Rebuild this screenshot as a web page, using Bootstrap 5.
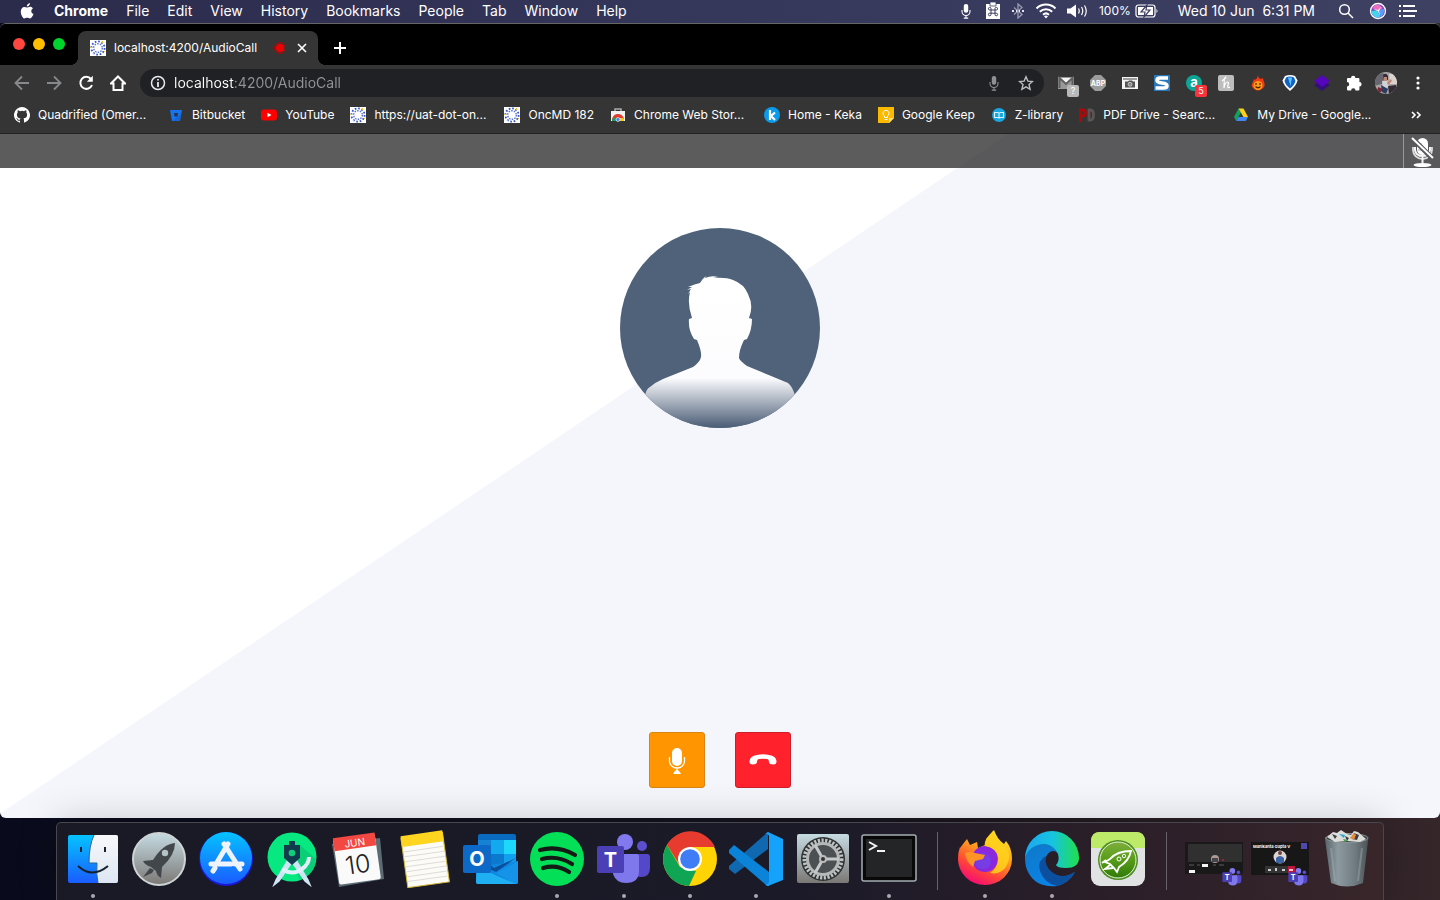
<!DOCTYPE html>
<html lang="en">
<head>
<meta charset="utf-8">
<meta name="viewport" content="width=device-width, initial-scale=1">
<title>localhost:4200/AudioCall</title>
<link href="https://cdn.jsdelivr.net/npm/bootstrap@5.3.0/dist/css/bootstrap.min.css" rel="stylesheet">
<style>
body{font-family:Inter,"Liberation Sans",sans-serif;color:#fff;font-size:12px;line-height:16px;background:linear-gradient(90deg,#090b1c,#17141d 60%,#35262a)}
svg{display:block;flex:none}
button,.plain-link{border:0;background:none;padding:0;color:inherit;text-decoration:none}
.menubar{height:23px;padding:0 22px 2px 18px;font-size:14px;line-height:20px;background:linear-gradient(90deg,#2b2b4b,#34365a 45%,#3f4163);white-space:nowrap}
.menubar-menus{gap:18px}
.menubar-status{gap:11px}
.status-icons{gap:9px}
.battery{font-size:12px}
.window{margin-bottom:4px;border-radius:6px;overflow:hidden;background:#353535;border-top:1px solid #666}
.tabstrip{height:41px;background:#000;padding-left:13px}
.lights{padding-bottom:2px}
.light{width:12px;height:12px;border-radius:50%}
.light-close{background:#ff4640}
.light-min{background:#ffbf00}
.light-max{background:#00d52e}
.page-tab{width:240px;height:34px;padding:0 8px 0 12px;background:#353535;border-radius:8px 8px 0 0;margin-left:13px;position:relative}
.page-tab::before,.page-tab::after{content:"";position:absolute;bottom:0;width:8px;height:8px}
.page-tab::before{left:-8px;background:radial-gradient(circle at 0 0,#000 8px,#353535 8px)}
.page-tab::after{right:-8px;background:radial-gradient(circle at 100% 0,#000 8px,#353535 8px)}
.toolbar{height:36px;padding:0 6px}
.tool{width:32px;height:32px;display:flex;align-items:center;justify-content:center;position:relative}
.tool-badge{position:absolute;right:3px;bottom:2px;width:12px;height:12px;border-radius:2px;font-size:9px;line-height:12px;text-align:center;background:#b9b9b9}
.tool-badge.alerting{background:#f8333c}
.omnibox{height:28px;border-radius:14px;background:#202124;margin:0 6px;padding:0 2px 0 10px}
.omnibox input{border:0;outline:0;min-width:0;padding:0;margin-left:8px;font-size:14px;line-height:20px;color:#9aa0a6;background:linear-gradient(90deg,#fff 61px,#929497 61px);-webkit-background-clip:text;background-clip:text;-webkit-text-fill-color:transparent}
.bookmarks{height:33px;padding:0 14px 4px;border-bottom:1px solid #222;white-space:nowrap}
.bookmark{display:flex;align-items:center;gap:8px;margin-right:16px}
.bookmark.clipped span{width:114px}
.call{background:linear-gradient(146deg,#fff 563px,#f5f6fc 564px)}
.call-bar{height:34px;background:rgba(0,0,0,.64)}
.mute-state{width:37px;border-left:1px solid #999}
.avatar{margin-top:60px}
.call-actions{gap:30px;padding-bottom:30px}
.call-btn{width:56px;height:56px;border-radius:3px;display:flex;align-items:center;justify-content:center}
.btn-mic{background:#ff9500;border:1px solid #d98515}
.btn-hang{background:#ff222d;border:1px solid #cb2029}
.dock{height:78px;margin:0 56px;padding:0 3px;border:1px solid #49474e;border-bottom:0;border-radius:5px 5px 0 0;background:linear-gradient(90deg,#191a26,#1b1a28 55%,#2e2029 85%,#38262a);box-shadow:0 0 40px rgba(0,0,0,.2);position:relative}
.dock-item{flex:1 1 0;height:77px;padding-top:7px;display:flex;flex-direction:column;align-items:center;position:relative}
.dock-item.running::after{content:"";position:absolute;bottom:2px;width:4px;height:4px;border-radius:50%;background:#aaa9b1}
.dock-rule{width:30px;display:flex;justify-content:center}
.dock-rule::before{content:"";width:1px;height:58px;margin-top:9px;background:#66616a}
</style>
</head>
<body class="min-vh-100 d-flex flex-column overflow-hidden">
<svg width="0" height="0" class="position-absolute" aria-hidden="true">
<defs>
<linearGradient id="blueSky" x2="0" y2="1"><stop stop-color="#05c3ff"/><stop offset="1" stop-color="#1a5cff"/></linearGradient>
<linearGradient id="silver" x2="0" y2="1"><stop stop-color="#c5dbe2"/><stop offset="1" stop-color="#7b7875"/></linearGradient>
<linearGradient id="paper" x2="0" y2="1"><stop stop-color="#f8f8fb"/><stop offset="1" stop-color="#dce6f2"/></linearGradient>
<linearGradient id="fox" x1=".8" y1="0" x2=".3" y2="1"><stop stop-color="#fff42e"/><stop offset=".4" stop-color="#ffa01c"/><stop offset=".72" stop-color="#ff4638"/><stop offset="1" stop-color="#f50778"/></linearGradient>
<linearGradient id="edgeTop"><stop stop-color="#1ba7ee"/><stop offset=".5" stop-color="#17c3e3"/><stop offset="1" stop-color="#1fe04a"/></linearGradient>
<linearGradient id="edgeLow" x2=".6" y2="1"><stop stop-color="#0f78c8"/><stop offset="1" stop-color="#0a84e8"/></linearGradient>
<linearGradient id="bin" x2="1" y2="0"><stop stop-color="#59656a"/><stop offset=".3" stop-color="#8d9a9f"/><stop offset=".7" stop-color="#6f7b80"/><stop offset="1" stop-color="#4b5357"/></linearGradient>
<linearGradient id="leaf" x2="0" y2="1"><stop stop-color="#7fae3c"/><stop offset=".5" stop-color="#579c18"/><stop offset="1" stop-color="#2f7a08"/></linearGradient>
<linearGradient id="bust" gradientUnits="userSpaceOnUse" x1="0" y1="0" x2="0" y2="200"><stop offset=".3" stop-color="#fff"/><stop offset=".75" stop-color="#fcfcfe"/><stop offset=".99" stop-color="#50627a"/></linearGradient>
<symbol id="onc" viewBox="0 0 16 16"><path fill="#fff" d="M0 0h16v16H0z"/><g fill="none" stroke-width="1.8"><circle cx="8" cy="8" r="6.6" stroke="#3454c5" stroke-dasharray="1.7 1.75"/><circle cx="8" cy="8" r="4.3" stroke="#5972d6" stroke-width="1.4" stroke-dasharray="1.5 1.2"/></g><path fill="#f0c33b" d="M0 7h2v1H0zM3 13h1v1H3zM12 1h1v2h-1zM14 11h1v1h-1z"/></symbol>
<symbol id="teams" viewBox="0 0 56 56"><circle cx="46" cy="15" r="5" fill="#5b4fd0"/><path fill="#5448c8" d="M38 23h13q3 0 3 3v11q0 9-9 9-5 0-8-3z"/><circle cx="29" cy="11" r="8" fill="#8279ee"/><path fill="#7f77ec" d="M18 23h23q2 0 2 3v14q0 12-13 12-10 0-13-9z"/><rect x="1" y="15" width="27" height="27" rx="2" fill="#4b3fb5"/><text x="14.500" y="36" fill="#fff" font-size="20" font-weight="700" text-anchor="middle">T</text></symbol>
<symbol id="mic" viewBox="0 0 12 18"><rect x="3.500" y="1" width="5" height="10" rx="2.500" fill="currentColor"/><path d="M1.500 8v1.500a4.500 4.500 0 0 0 9 0V8M6 14v3M3.500 17h5" fill="none" stroke="currentColor" stroke-width="1.200"/></symbol>
</defs></svg>

<header class="menubar d-flex justify-content-between">
<nav class="menubar-menus d-flex align-items-center" aria-label="Menu bar">
<button aria-label="Apple"><svg width="18" height="18" viewBox="0 0 18 18" fill="#fff"><path d="M12 1c0 2-1.500 3.600-3.200 3.500C8.700 2.700 10.200 1.200 12 1zM9 5.600c.8 0 1.600-.8 3.100-.8 1.200 0 2.200.6 2.900 1.500-2.500 1.500-2.100 4.800.5 5.800-.6 1.700-2 4.400-3.600 4.400-1 0-1.500-.7-2.800-.7s-1.800.7-2.800.7C4.300 16.500 1 9 4 6.200c1.900-2 3.800-.7 5-.6z"/></svg></button>
<button class="fw-bold">Chrome</button><button>File</button><button>Edit</button><button>View</button><button>History</button><button>Bookmarks</button><button>People</button><button>Tab</button><button>Window</button><button>Help</button>
</nav>
<div class="menubar-status d-flex align-items-center">
<div class="status-icons d-flex align-items-center">
<svg class="me-1" width="12" height="16"><use href="#mic"/></svg>
<svg width="16" height="18" viewBox="0 0 16 18"><path d="M1 2h14v15H1z" fill="#fff"/><path d="M5 0h6v4H5z" fill="#fff" stroke="#3b3d60" stroke-width=".8"/><path d="M6 8V6.500A1.300 1.300 0 1 0 4.700 8h6.600A1.300 1.300 0 1 0 10 6.500v6a1.300 1.300 0 1 0 1.300-1.300H4.700A1.300 1.300 0 1 0 6 12.500z" fill="none" stroke="#3b3d60" stroke-width="1"/></svg>
<svg width="16" height="16" viewBox="0 0 16 16" fill="none" stroke="#9a9bb4" stroke-width="1.300"><path d="M4 4.500l8 7L8 15V1l4 3.500-8 7"/><path d="M2 8h2m2 0h1m2 0h1m2 0h2" stroke="#e6e6ef" stroke-width="2"/></svg>
<svg width="22" height="16" viewBox="0 0 22 16" fill="none" stroke="#fff" stroke-width="2"><path d="M1.500 5.500a13.500 13.500 0 0 1 19 0M4.800 8.700a8.800 8.800 0 0 1 12.400 0M8 11.700a4.500 4.500 0 0 1 6 0"/><path d="M9 13.300L11 15.500l2-2.200a3 3 0 0 0-4 0z" fill="#fff" stroke="none"/></svg>
<svg width="22" height="16" viewBox="0 0 22 16"><path fill="#fff" d="M1 5.500h3.500L10 1.500v13L4.500 10.500H1z"/><path d="M12.500 5.500q1.500 2.500 0 5M15.500 4q2.500 4 0 8M18.500 2.500q3.500 5.500 0 11" fill="none" stroke="#fff" stroke-width="1.200"/></svg>
</div>
<div class="battery d-flex align-items-center gap-1 me-2"><span>100%</span>
<svg width="24" height="14" viewBox="0 0 24 14"><rect x="1" y="1" width="19" height="12" rx="2.500" fill="none" stroke="#fff" stroke-width="1.200"/><path d="M3 3h15v8H3z" fill="#fff"/><path d="M12 1L6 8h4l-1 5 6-7h-4z" fill="#fff" stroke="#3d3f62" stroke-width="1.200"/><path d="M21.500 5q2 2 0 4z" fill="#fff"/></svg></div>
<time class="me-2">Wed 10 Jun&nbsp; 6:31 PM</time>
<button class="mx-1" aria-label="Search"><svg width="16" height="16" viewBox="0 0 16 16" fill="none" stroke="#fff" stroke-width="1.500"><circle cx="6.500" cy="6.500" r="4.800"/><path d="M10 10l5 5"/></svg></button>
<svg width="18" height="18" viewBox="0 0 18 18"><circle cx="9" cy="9" r="7.500" fill="#6548bd" stroke="#fff" stroke-width="1.300"/><path d="M3 6q5-7 11 0L9 9z" fill="#ef6cbf"/><path d="M2 9l7-1 2 7q-7 2-9-6z" fill="#48d2ed"/><path d="M8 8l7-1q1 5-4 8z" fill="#5d9dfa"/><path d="M4 7l5 1 3-3-2 4 1 5-2-5z" fill="#fff"/></svg>
<svg width="20" height="14" viewBox="0 0 20 14" stroke="#fff" stroke-width="1.800"><path d="M1 2h2m2 0h12M1 7h2m2 0h14M1 12h2m2 0h12"/></svg>
</div>
</header>

<div class="window flex-grow-1 d-flex flex-column">
<div class="tabstrip d-flex align-items-end">
<div class="lights d-flex gap-2 align-self-center"><span class="light light-close"></span><span class="light light-min"></span><span class="light light-max"></span></div>
<div class="page-tab d-flex align-items-center"><svg width="16" height="16"><use href="#onc"/></svg><span class="ms-2 flex-grow-1 text-nowrap">localhost:4200/AudioCall</span>
<svg width="12" height="12" viewBox="0 0 12 12" class="me-2"><circle cx="6" cy="6" r="5.400" fill="none" stroke="#c00000"/><circle cx="6" cy="6" r="4" fill="#ef0000"/></svg>
<button aria-label="Close tab"><svg width="16" height="16" viewBox="0 0 16 16" stroke="#fff" stroke-width="1.600"><path d="M4 4l8 8m0-8l-8 8"/></svg></button></div>
<button class="ms-3 mb-2" aria-label="New tab"><svg width="12" height="20" viewBox="0 0 12 20" stroke="#fff" stroke-width="2"><path d="M6 5v12M0 11h12"/></svg></button>
</div>

<div class="toolbar d-flex align-items-center">
<button class="tool" aria-label="Back"><svg width="16" height="16" viewBox="0 0 16 16" fill="none" stroke="#87888a" stroke-width="1.800"><path d="M15 8H2m6-6.500L1.500 8 8 14.500"/></svg></button>
<button class="tool" aria-label="Forward"><svg width="16" height="16" viewBox="0 0 16 16" fill="none" stroke="#87888a" stroke-width="1.800"><path d="M1 8h13M8 1.500L14.500 8 8 14.500"/></svg></button>
<button class="tool" aria-label="Reload"><svg width="16" height="16" viewBox="0 0 16 16" fill="none" stroke="#fff" stroke-width="2"><path d="M13 4a6 6 0 1 0 1 6"/><path d="M14.800.8v6h-6z" fill="#fff" stroke="none"/></svg></button>
<button class="tool" aria-label="Home"><svg width="16" height="16" viewBox="0 0 16 16" fill="none" stroke="#fff" stroke-width="2"><path d="M1 8.500h2.500V15h9V8.500H15L8 1.500z"/></svg></button>
<div class="omnibox d-flex align-items-center flex-grow-1">
<svg width="16" height="16" viewBox="0 0 16 16" fill="none" stroke="#e8eaed" stroke-width="1.500"><circle cx="8" cy="8" r="6.500"/><path d="M8 7v5M8 4v1.600" stroke-width="1.800"/></svg>
<input class="flex-grow-1" type="text" value="localhost:4200/AudioCall" aria-label="Address" spellcheck="false">
<button class="tool text-white-50" aria-label="Microphone access"><svg width="12" height="16"><use href="#mic"/></svg></button>
<button class="tool" aria-label="Bookmark this tab"><svg width="16" height="16" viewBox="0 0 16 16" fill="none" stroke="#bcbdbf" stroke-width="1.400"><path d="M8 1.800l1.900 4.300 4.600.4L11 9.600l1.100 4.700L8 11.800l-4.100 2.500L5 9.600 1.500 6.500l4.600-.4z"/></svg></button>
</div>
<button class="tool" aria-label="Mail checker"><svg width="16" height="16" viewBox="0 0 16 16"><path fill="#999" d="M0 2h16v12H0z"/><path fill="#f4f4f4" d="M2.500 3h11L8 8z"/><path d="M1.500 13V3L8 9l6.500-6v10" fill="none" stroke="#606060" stroke-width="2"/></svg><span class="tool-badge">?</span></button>
<button class="tool" aria-label="Ad blocker"><svg width="16" height="16" viewBox="0 0 16 16"><path fill="#9c9c9c" d="M5 0h6l5 5v6l-5 5H5l-5-5V5z"/><text x="8" y="11" text-anchor="middle" font-size="7" font-weight="700" fill="#fff">ABP</text></svg></button>
<button class="tool" aria-label="Screenshot"><svg width="16" height="16" viewBox="0 0 16 16"><path d="M0 2h16v12H0z" fill="#f5f5f5"/><path d="M1 4h14" stroke="#444"/><path d="M3 6.500h3l1-1h3l1 1h2v6H3z" fill="#555"/><circle cx="8" cy="9.300" r="2" fill="#888" stroke="#ddd" stroke-width=".7"/></svg></button>
<button class="tool" aria-label="S extension"><svg width="16" height="16" viewBox="0 0 16 16"><path fill="#2879bc" d="M0 0h16v16H0z"/><path d="M14 3H6Q3 3 3 5.200t5 2.800 5 2.800-3 2.200H1.500" fill="none" stroke="#fff" stroke-width="3.500"/></svg></button>
<button class="tool" aria-label="Amazon assistant"><svg width="16" height="16" viewBox="0 0 16 16"><circle cx="8" cy="8" r="8" fill="#0da595"/><text x="8" y="12" text-anchor="middle" font-size="13" font-weight="700" fill="#fff">a</text></svg><span class="tool-badge alerting">5</span></button>
<button class="tool" aria-label="Honey"><svg width="16" height="16" viewBox="0 0 16 16"><rect width="16" height="16" rx="2" fill="#bdbdbd"/><path d="M4 6q5-4 3.500-4Q6 2 6 13q1-6 3.500-6Q11 7 10 10q-1 4 2 2" fill="none" stroke="#fff" stroke-width="1.200"/></svg></button>
<button class="tool" aria-label="Hola"><svg width="14" height="16" viewBox="0 0 14 16"><path fill="#f23a15" d="M7 0q0 3 3 4l2-1q0 2 1 4 2 5-2 7-4 3-8 0-4-3-1-7l1-3 1 1q3-2 3-5z"/><circle cx="7" cy="10.500" r="4.500" fill="#ff9b18"/><path d="M5 8v2m4-2v2M4.500 11.500q2.500 2.500 5 0" fill="none" stroke="#552208" stroke-width="1.200"/></svg></button>
<button class="tool" aria-label="Diamond extension"><svg width="16" height="16" viewBox="0 0 16 16"><path d="M3 1q5-2 10 0l2.500 4.500q-1 5-7.500 10.500Q1.500 10.500.5 5.500z" fill="#fff"/><path d="M4 2.500q4-2 8 0l1.500 3.500q-1 4-5.500 7.500Q3.500 10 2.500 6z" fill="#1263c1"/><path d="M6 2.500h4L8.500 11z" fill="#5cc4ff"/></svg></button>
<button class="tool" aria-label="Layers extension"><svg width="16" height="16" viewBox="0 0 16 16"><path d="M0 10l8-5 8 5-8 6z" fill="#321078"/><path d="M0 6l8-6 8 6-8 6z" fill="#5505bb"/></svg></button>
<button class="tool" aria-label="Extensions"><svg width="16" height="16" viewBox="0 0 16 16" fill="#fff"><path d="M1 4q0-1 1-1h3a2.200 2.200 0 1 1 4.400 0h3q1 0 1 1v3a2.200 2.200 0 1 1 0 4.400v3q0 1-1 1H9.500a2.200 2.200 0 1 0-4.400 0H2q-1 0-1-1v-3a2.200 2.200 0 1 0 0-4.400z"/></svg></button>
<button class="tool" aria-label="Profile"><svg width="22" height="22" viewBox="0 0 22 22"><clipPath id="pc"><circle cx="11" cy="11" r="11"/></clipPath><g clip-path="url(#pc)"><path fill="#aaa6a5" d="M0 0h22v22H0z"/><path fill="#d9d2ce" d="M14 2h8v10h-7z"/><path fill="#69666f" d="M0 3l8-2 4 5-5 6-8 2z"/><path fill="#cfd2d8" d="M7 9l5-1 2 7-6 2z"/><path fill="#352b35" d="M8 3q3-3 5 1v4l-4-1zM13 14l8-1v5l-7 4z"/><path fill="#c28773" d="M9 5h3v4H9zM12 11l4-4 1 2-4 4z"/><path fill="#8a2132" d="M3 15l5 2-2 3H2z"/><path fill="#293e61" d="M6 13l7 4-2 5-4-2z"/></g></svg></button>
<button class="tool" aria-label="More"><svg width="4" height="16" viewBox="0 0 4 16" fill="#fff"><circle cx="2" cy="3" r="1.600"/><circle cx="2" cy="8" r="1.600"/><circle cx="2" cy="13" r="1.600"/></svg></button>
</div>

<nav class="bookmarks d-flex align-items-center" aria-label="Bookmarks">
<a href="#" class="plain-link bookmark clipped"><svg width="16" height="16" viewBox="0 0 16 16" fill="#fff"><path d="M8 0a8 8 0 0 0-2.530 15.590c.4.070.55-.170.550-.380v-1.490c-2.230.480-2.700-.950-2.700-.950-.360-.920-.890-1.170-.890-1.170-.730-.500.050-.490.050-.490.800.060 1.230.830 1.230.830.720 1.220 1.870.870 2.330.660.070-.520.280-.870.510-1.070-1.780-.200-3.640-.890-3.640-3.950 0-.870.310-1.590.820-2.150-.080-.200-.360-1.020.080-2.120 0 0 .670-.210 2.200.820a7.600 7.600 0 0 1 4 0c1.530-1.040 2.200-.820 2.200-.820.440 1.100.160 1.920.080 2.120.510.560.820 1.270.820 2.150 0 3.070-1.870 3.750-3.650 3.950.290.250.540.730.540 1.480v2.200c0 .210.150.460.550.380A8 8 0 0 0 8 0z"/></svg><span>Quadrified (Omer...</span></a>
<a href="#" class="plain-link bookmark"><svg width="16" height="16" viewBox="0 0 16 16"><path d="M2 3h12l-2 11H4z" fill="#1873ee"/><path d="M6 6h4l-.6 3.500h-2.800z" fill="#263449"/><path d="M10 9l3-2-1 7H5z" fill="#135cc8" opacity=".6"/></svg><span>Bitbucket</span></a>
<a href="#" class="plain-link bookmark"><svg width="16" height="16" viewBox="0 0 16 16"><rect y="2.500" width="16" height="11" rx="3" fill="#f00"/><path fill="#fff" d="M6.500 5.700v4.600L10.500 8z"/></svg><span>YouTube</span></a>
<a href="#" class="plain-link bookmark clipped"><svg width="16" height="16"><use href="#onc"/></svg><span>https://uat-dot-on...</span></a>
<a href="#" class="plain-link bookmark"><svg width="16" height="16"><use href="#onc"/></svg><span>OncMD 182</span></a>
<a href="#" class="plain-link bookmark clipped"><svg width="16" height="16" viewBox="0 0 16 16"><path d="M5 4V2h6v2" fill="none" stroke="#aaa" stroke-width="1.500"/><path d="M1 4h14v10H1z" fill="#f1f1f1"/><path d="M2 14a6 6 0 0 1 12-2H8z" fill="#e33b2e"/><path d="M2 14q0-3 2-4l3 4z" fill="#16a05d"/><path d="M14 14q0-2-1-3H8l2 3z" fill="#fdc81b"/><circle cx="8" cy="12.500" r="2" fill="#4086f4" stroke="#fff" stroke-width=".6"/></svg><span>Chrome Web Stor...</span></a>
<a href="#" class="plain-link bookmark"><svg width="16" height="16" viewBox="0 0 16 16"><circle cx="8" cy="8" r="8" fill="#0b9bea"/><path d="M6 3v10M11 5.500L7 9l4 4" fill="none" stroke="#fff" stroke-width="2.200"/></svg><span>Home - Keka</span></a>
<a href="#" class="plain-link bookmark"><svg width="16" height="16" viewBox="0 0 16 16"><path d="M0 0h16v11l-5 5H0z" fill="#fbb900"/><path d="M11 16l5-5h-5z" fill="#ffe173"/><path d="M6.500 10.500V9a3 3 0 1 1 3 0v1.500zM6.500 12.500h3" fill="none" stroke="#fff" stroke-width="1"/></svg><span>Google Keep</span></a>
<a href="#" class="plain-link bookmark"><svg width="16" height="16" viewBox="0 0 16 16"><circle cx="8" cy="8" r="7" fill="#15a7e2"/><path d="M3.500 5.500h3q1.500 0 1.500 1 0-1 1.500-1h3v5h-3q-1.500 0-1.500 1 0-1-1.500-1h-3zM8 6v5" fill="none" stroke="#d8f4ff" stroke-width="1.100"/></svg><span>Z-library</span></a>
<a href="#" class="plain-link bookmark clipped"><svg width="16" height="16" viewBox="0 0 16 16" fill="none" stroke-width="2.800"><path d="M1.500 15V3H4q2.500 0 2.500 3T4 9H1.500" stroke="#ae0909"/><path d="M10 3v10h1.500q3 0 3-5t-3-5z" stroke="#5c5555"/></svg><span>PDF Drive - Searc...</span></a>
<a href="#" class="plain-link bookmark clipped"><svg width="16" height="16" viewBox="0 0 16 16"><path d="M5.500 1.500L1 10l2.200 4L8 5.500z" fill="#13a25b"/><path d="M5.500 1.500h5L15 10h-4.500z" fill="#ffcf19"/><path d="M5.500 10H15l-2.200 4H3.200z" fill="#4385f4"/></svg><span>My Drive - Google...</span></a>
<button class="ms-auto" aria-label="More bookmarks"><svg width="18" height="16" viewBox="0 0 18 16" fill="none" stroke="#fff" stroke-width="1.600"><path d="M4 5l3 3-3 3m5-6l3 3-3 3"/></svg></button>
</nav>

<main class="call flex-grow-1 d-flex flex-column align-items-center">
<div class="call-bar w-100 d-flex justify-content-end"><div class="mute-state d-flex align-items-center justify-content-center"><svg width="26" height="32" viewBox="0 0 26 32"><rect x="8" y="3" width="11" height="17" rx="5.500" fill="#fff"/><path d="M4 12v3a9.500 9 0 0 0 19 0v-3" fill="none" stroke="#ddd" stroke-width="1.800"/><path d="M6 12v3q1 6 7.500 6t7.500-6v-3M13.500 22v6" fill="none" stroke="#f4f4f4" stroke-width="2"/><ellipse cx="13.500" cy="30" rx="9" ry="2" fill="#fff"/><path d="M9 9h4m-4 3h5m-5 3h8" stroke="#aaa"/><path d="M3 3l20 20" stroke="#58585a" stroke-width="5"/><path d="M3 3l21 20" stroke="#fff" stroke-width="2"/></svg></div></div>
<svg class="avatar" width="200" height="200" viewBox="0 0 200 200" role="img" aria-label="Caller"><clipPath id="disc"><circle cx="100" cy="100" r="100"/></clipPath><circle cx="100" cy="100" r="100" fill="#50627a"/><path clip-path="url(#disc)" fill="url(#bust)" d="M72 90Q67 76 70 64L68 66 71 61 67 62 72 59 68 59Q75 56 80 55Q82 51 86 48L85 50Q92 47 98 49L93 50Q106 49 113 52Q124 56 128 66Q134 78 129 90L132 91Q132 102 127 111L124 112Q119 122 119 130Q120 133 127 138L168 155Q173 159 175 168V200H25V168Q26 161 30 159Q36 154 43 151L73 139Q80 134 81 129Q82 124 77 112L74 111Q68 102 69 91Z"/></svg>
<div class="call-actions d-flex mt-auto">
<button class="call-btn btn-mic" aria-label="Mute"><svg width="18" height="28" viewBox="0 0 18 28"><rect x="4" y="2" width="10" height="18" rx="5" fill="#fff"/><path d="M1.500 11v4a7.500 7 0 0 0 15 0v-4M9 22v3" fill="none" stroke="#fff" stroke-width="1.300"/><path d="M5 28q2-4 4-4t4 4z" fill="#fff"/></svg></button>
<button class="call-btn btn-hang" aria-label="Hang up"><svg width="28" height="14" viewBox="0 0 28 14"><path d="M.5 8Q1 3 8 2q6-1.500 12 0 7 1 7.500 6 .2 3.500-3 3.500-4.500 0-4.500-2.500-.2-3-2-3-4-.6-8 0-1.800 0-2 3-.2 2.500-4.500 2.500Q.3 11.500.5 8z" fill="#fff"/></svg></button>
</div>
</main>
</div>

<nav class="dock d-flex" aria-label="Dock">
<button class="dock-item running" aria-label="Finder"><svg width="56" height="58" viewBox="0 0 56 58"><rect x="3" y="5" width="50" height="48" rx="2" fill="url(#blueSky)"/><path d="M29 5h22q2 0 2 2v44q0 2-2 2H33q-2-9-1-20h-8Q24 15 29 5z" fill="url(#paper)"/><path d="M29 5q-5 11-5 28h8q-1 11 1 20" fill="none" stroke="#276796"/><path d="M16 17v5m24-5v5" stroke="#15212b" stroke-width="2"/><path d="M13 36q14 13 30 0" fill="none" stroke="#15212b" stroke-width="2"/></svg></button>
<button class="dock-item" aria-label="Launchpad"><svg width="56" height="58" viewBox="0 0 56 58"><circle cx="28" cy="29" r="26" fill="url(#silver)" stroke="#ced4d6" stroke-width="2"/><path d="M44 13q0 12-13 24l-1 11q-4-2-5-7l-5-4q-6-2-8-6l10-1Q32 14 44 13zM19 38l-7 9 9-4 2-3z" fill="#42474b"/><circle cx="34" cy="23" r="3.200" fill="#b3c3c9"/></svg></button>
<button class="dock-item" aria-label="App Store"><svg width="56" height="58" viewBox="0 0 56 58"><circle cx="28" cy="29" r="27" fill="#1b16d4"/><circle cx="28" cy="28" r="26" fill="url(#blueSky)"/><path d="M30 14L18 34M26 14l16 25M13 34h20m4 0h7M17 38l-2 3" stroke="#eef2fb" stroke-width="5" stroke-linecap="round"/></svg></button>
<button class="dock-item" aria-label="Android Studio"><svg width="56" height="58" viewBox="0 0 56 58"><circle cx="28" cy="27" r="24.500" fill="#08e880"/><path d="M36 15l16 14q-2 16-16 21l-8-18z" fill="#0bc474" opacity=".7"/><path d="M24 30L12 50l-2 5 5-4 13-19zM32 30l12 20 2 5-5-4-13-19z" fill="#cfe4f5" stroke="#cfe4f5" stroke-width="1.500"/><path d="M18 39q11 7 20 0 7-5 7-12" fill="none" stroke="#e1effa" stroke-width="4"/><path d="M20 15h5v-4h6v4h5v13l-8 7-8-7z" fill="#123b4d"/><circle cx="28" cy="23" r="3.300" fill="#10ce7c"/></svg></button>
<button class="dock-item" aria-label="Calendar"><svg width="56" height="58" viewBox="0 0 56 58"><path d="M2 14l48-6 4 41-45 8z" fill="#5b6a73"/><g transform="rotate(-8 28 29)"><rect x="6" y="6" width="42" height="46" rx="2" fill="#fafafa"/><path d="M6 5h42v13H6z" fill="#f34741"/><text x="27" y="16" text-anchor="middle" font-size="10" fill="#fff">JUN</text><text x="27" y="43" text-anchor="middle" font-size="25" font-weight="300" fill="#222">10</text></g></svg></button>
<button class="dock-item" aria-label="Notes"><svg width="56" height="58" viewBox="0 0 56 58"><g transform="rotate(-8 28 29)"><path d="M7 5h42v50H7z" fill="#fcfbf5" stroke="#d0b63b"/><path d="M7 3h42v11H7z" fill="#ffd51f"/><path d="M8 19h40M8 24h40M8 29h40M8 34h40M8 39h40M8 44h40M8 49h40" stroke="#dcdcdc"/></g></svg></button>
<button class="dock-item" aria-label="Outlook"><svg width="56" height="58" viewBox="0 0 56 58"><path d="M15 6q0-2 2-2h34q2 0 2 2v31H15z" fill="#086bc0"/><path d="M15 10h13v14H15z" fill="#1682d4"/><path d="M28 10h13v14H28z" fill="#12a9ee"/><path d="M41 10h12v14H41z" fill="#1ed8fc"/><path d="M28 24h13v14H28z" fill="#0b79ce"/><path d="M41 24h12v8l-12 7z" fill="#129ff0"/><path d="M13 37l42-6v21q0 2-2 2H15q-2 0-2-2z" fill="#1087e0"/><path d="M53 28L33 42l-18-8V24l16 14z" fill="#0a4f9b"/><path d="M55 31L33 43l18 11h2q2 0 2-2z" fill="#1493e8"/><path d="M14 37l39 17H15q-2 0-2-2z" fill="#1fb0f4"/><rect x="0" y="15" width="28" height="28" rx="2" fill="#0d69c8"/><text x="14" y="36" text-anchor="middle" font-size="20" font-weight="700" fill="#fff">O</text></svg></button>
<button class="dock-item running" aria-label="Spotify"><svg width="56" height="58" viewBox="0 0 56 58"><circle cx="28" cy="29" r="27" fill="#04df58"/><path d="M11 20q18-5 35 5M13 29q16-4 30 5M14 38q14-4 26 4" fill="none" stroke="#141a16" stroke-linecap="round" stroke-width="4.200"/></svg></button>
<button class="dock-item running" aria-label="Microsoft Teams"><svg width="56" height="58"><use href="#teams"/></svg></button>
<button class="dock-item running" aria-label="Chrome"><svg width="56" height="58" viewBox="0 0 56 58"><circle cx="28" cy="29" r="27" fill="#ffd304"/><path d="M5 15a27 27 0 0 1 48 2H28L17 34z" fill="#e63b2e"/><path d="M5 15l13 22 16 4-7 15A27 27 0 0 1 5 15z" fill="#10a455"/><circle cx="28" cy="29" r="12" fill="#fff"/><circle cx="28" cy="29" r="9.800" fill="#3f7df6"/></svg></button>
<button class="dock-item running" aria-label="Visual Studio Code"><svg width="56" height="58" viewBox="0 0 56 58"><path d="M40 2v17L7 44l-6-5v-3z" fill="#0f68b0"/><path d="M1 20l5-5 35 27v14q-2 0-4-2L1 23z" fill="#0a83d8"/><path d="M40 2l15 7v41l-15 6q-2 0-3-2 3 1 4-2V6q-1-3-4-2z" fill="#14a2fa"/></svg></button>
<button class="dock-item" aria-label="System Preferences"><svg width="56" height="58" viewBox="0 0 56 58"><rect x="2" y="4" width="52" height="49" rx="2" fill="url(#silver)"/><circle cx="28" cy="29" r="22" fill="#303234"/><circle cx="28" cy="29" r="18.500" fill="none" stroke="#bfc2c3" stroke-width="4" stroke-dasharray="2.200 1.500"/><circle cx="28" cy="29" r="15.500" fill="#4c5053" stroke="#b5b8b8" stroke-width="3"/><path d="M28 29h16M28 29l-8-14m8 14l-8 14" stroke="#c5c8c8" stroke-width="3"/><circle cx="28" cy="29" r="4" fill="#bbb"/><circle cx="28" cy="29" r="2" fill="#333"/></svg></button>
<button class="dock-item running" aria-label="Terminal"><svg width="56" height="58" viewBox="0 0 56 58"><rect x="1" y="5" width="54" height="46" rx="2" fill="#080808" stroke="#a4adb2" stroke-width="1.500"/><path d="M5 9h46v38H5z" fill="#242526"/><path d="M8 12l7 4-7 4M16 21h8" fill="none" stroke="#f4f4f4" stroke-width="2"/></svg></button>
<span class="dock-rule"></span>
<button class="dock-item running" aria-label="Firefox"><svg width="56" height="58" viewBox="0 0 56 58"><path d="M3 18l3-4 4-5 3 6 7-3 1 6 7-3 1-6 8-9q3 9 10 14l2-3q6 7 6 18a27 26 0 0 1-54 0q0-7 2-12z" fill="url(#fox)"/><circle cx="28" cy="29" r="13" fill="#8a28e0"/><circle cx="26" cy="31" r="8" fill="#6a4be8" opacity=".6"/><path d="M8 23q4-2 10 0l10 2-2 4-8 2-2 6q-7-5-8-14z" fill="#ff9426"/><path d="M36 1q-10 10-8 15 12 2 13 12 0 10-8 15 10 2 16-6 8-14-4-23-6-4-9-13z" fill="#ffd21c" opacity=".85"/></svg></button>
<button class="dock-item running" aria-label="Microsoft Edge"><svg width="56" height="58" viewBox="0 0 56 58"><path d="M1 28Q3 14 20 14Q30 15 34 23Q28 18 23 25Q17 36 27 44Q38 50 51 42Q45 53 33 56Q12 58 4 42Q1 36 1 28z" fill="url(#edgeLow)"/><path d="M22 26Q13 30 16 41Q20 53 33 56Q45 53 51 42Q38 50 28 42Q20 36 22 26z" fill="#0d4f9f"/><path d="M1 28A27 27 0 0 1 55 28Q55 38 42 38Q33 38 32 35Q36 31 34 24Q30 15 20 14Q5 15 1 28z" fill="url(#edgeTop)"/></svg></button>
<button class="dock-item" aria-label="Rocket app"><svg width="56" height="58" viewBox="0 0 56 58"><rect x="1" y="2" width="54" height="54" rx="9" fill="#e0e2e3"/><path d="M1 18v-7q0-9 9-9h36q9 0 9 9v7z" fill="#bdea68"/><circle cx="28" cy="30" r="20" fill="#4a8d20"/><circle cx="28" cy="30" r="18" fill="url(#leaf)" stroke="#e7f2d8"/><path d="M41 21q-2 10-12 16l-2 5-3-4-4-4-5-2 5-3q7-8 21-8zM20 35l-5 4 8-1M16 30l-4 3" fill="none" stroke="#fff" stroke-width="1.800"/><circle cx="29" cy="29" r="2" fill="none" stroke="#fff"/><circle cx="34" cy="26" r="1.700" fill="none" stroke="#fff"/></svg></button>
<span class="dock-rule"></span>
<button class="dock-item" aria-label="Teams meeting"><svg width="60" height="58" viewBox="0 0 60 58"><path d="M1 12h58v32H1z" fill="#191919"/><path d="M4 14h54v18H4z" fill="#303030"/><circle cx="31" cy="29" r="4" fill="#ae9a93"/><path d="M28 28h6v4h-6z" fill="#46474e"/><path d="M5 35h5m3 0h3m13 0h3m3 0h5" stroke="#3a3a3a" stroke-width="2"/><path d="M18 34h6v3h-6zM5 40h6v3H5z" fill="#f4f4f4"/><circle cx="39" cy="30" r="1" fill="#b22440"/><use href="#teams" x="38" y="37" width="20" height="20"/></svg></button>
<button class="dock-item" aria-label="Teams call"><svg width="60" height="58" viewBox="0 0 60 58"><path d="M1 12h58v33H1z" fill="#171717"/><text x="3" y="18" font-size="4" font-weight="700" fill="#fff">Manikanta Gupta V</text><path d="M51 13h6v6h-6z" fill="#5148ad"/><circle cx="30" cy="27" r="6.500" fill="#ddd6d3"/><circle cx="30" cy="23" r="2" fill="#70443a"/><path d="M26 33v-5q4-4 8 0v5z" fill="#3d63a7"/><path d="M15 36h23v7H15z" fill="#343434"/><path d="M38 36h7v7h-7z" fill="#bd173e"/><path d="M18 40h3m5-2v3m6-1h3m4 0h4" stroke="#fff" stroke-width="1.500"/><use href="#teams" x="38" y="37" width="20" height="20"/></svg></button>
<button class="dock-item" aria-label="Trash"><svg width="56" height="58" viewBox="0 0 56 58"><path d="M6 7l39-1q5 1 4 5l-5 42q-16 7-32 0L6 9z" fill="url(#bin)"/><ellipse cx="28" cy="8" rx="21" ry="4.500" fill="#3c4549" stroke="#8e999d"/><path d="M8 7l6-5 4 1 4-3 6 4 4 1 3-4 4 1 8 7-6 3-13-1-12 1z" fill="#dcdcd9"/><path d="M13 4l5 2-2 3zM35 3l5 2-2 5-5-1zM26 6l4 2-2 3z" fill="#3a3d47"/><path d="M20 4l6 1-1 3z" fill="#26a9d1"/><path d="M31 8l4-5 2 2-2 5z" fill="#e58a38"/><path d="M24 9l5 1-3 2z" fill="#43a047"/><path d="M12 18l4 33M43 18l-4 33" stroke="#b2bcc0" opacity=".35" stroke-width="2"/></svg></button>
</nav>
<script src="https://cdn.jsdelivr.net/npm/bootstrap@5.3.0/dist/js/bootstrap.bundle.min.js"></script>
</body>
</html>
